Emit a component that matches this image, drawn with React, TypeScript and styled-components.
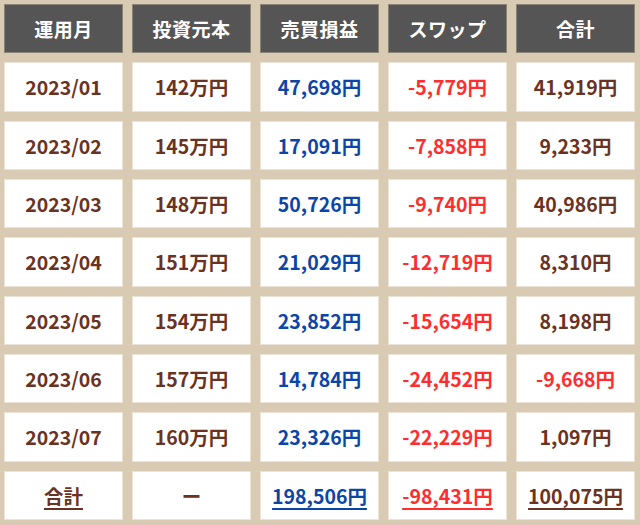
import React from "react";
import styled, { createGlobalStyle } from "styled-components";

const Global = createGlobalStyle`
  html, body { margin: 0; padding: 0; background: #d9cab3; }
  body { font-family: "Noto Sans CJK JP", "Noto Sans", sans-serif; }
`;

const Table = styled.div`
  display: grid;
  grid-template-columns: repeat(5, 1fr);
  grid-template-rows: repeat(9, 1fr);
  gap: 9px;
  padding: 4px 5px 5px 4px;
  width: 640px;
  height: 525px;
  box-sizing: border-box;
  background: #d9cab3;
`;

const HeadCell = styled.div`
  background: #555555;
  border: 1px solid #8a8378;
  color: #ffffff;
  font-weight: 700;
  font-size: 19px;
  display: flex;
  align-items: center;
  justify-content: center;
  letter-spacing: 0.5px;
`;

type Tone = "brown" | "blue" | "red";
const colors: Record<Tone, string> = {
  brown: "#6a3222",
  blue: "#0b45a8",
  red: "#ff2d2d",
};

const Cell = styled.div<{ $tone: Tone; $total?: boolean }>`
  background: #ffffff;
  border: 1px solid #ece3d6;
  color: ${(p) => colors[p.$tone]};
  font-weight: 700;
  font-size: 19.5px;
  display: flex;
  align-items: center;
  justify-content: center;
  text-decoration: ${(p) => (p.$total ? "underline" : "none")};
  text-underline-offset: 4px;
  text-decoration-thickness: 2px;
`;

const heads = ["運用月", "投資元本", "売買損益", "スワップ", "合計"];

const rows: [string, string, string, string, string, boolean][] = [
  ["2023/01", "142万円", "47,698円", "-5,779円", "41,919円", false],
  ["2023/02", "145万円", "17,091円", "-7,858円", "9,233円", false],
  ["2023/03", "148万円", "50,726円", "-9,740円", "40,986円", false],
  ["2023/04", "151万円", "21,029円", "-12,719円", "8,310円", false],
  ["2023/05", "154万円", "23,852円", "-15,654円", "8,198円", false],
  ["2023/06", "157万円", "14,784円", "-24,452円", "-9,668円", true],
  ["2023/07", "160万円", "23,326円", "-22,229円", "1,097円", false],
];

export default function App() {
  return (
    <>
      <Global />
      <Table>
        {heads.map((h) => (
          <HeadCell key={h}>{h}</HeadCell>
        ))}
        {rows.map(([m, p, t, s, sum, neg]) => (
          <React.Fragment key={m}>
            <Cell $tone="brown">{m}</Cell>
            <Cell $tone="brown">{p}</Cell>
            <Cell $tone="blue">{t}</Cell>
            <Cell $tone="red">{s}</Cell>
            <Cell $tone={neg ? "red" : "brown"}>{sum}</Cell>
          </React.Fragment>
        ))}
        <Cell $tone="brown" $total>合計</Cell>
        <Cell $tone="brown">ー</Cell>
        <Cell $tone="blue" $total>198,506円</Cell>
        <Cell $tone="red" $total>-98,431円</Cell>
        <Cell $tone="brown" $total>100,075円</Cell>
      </Table>
    </>
  );
}
